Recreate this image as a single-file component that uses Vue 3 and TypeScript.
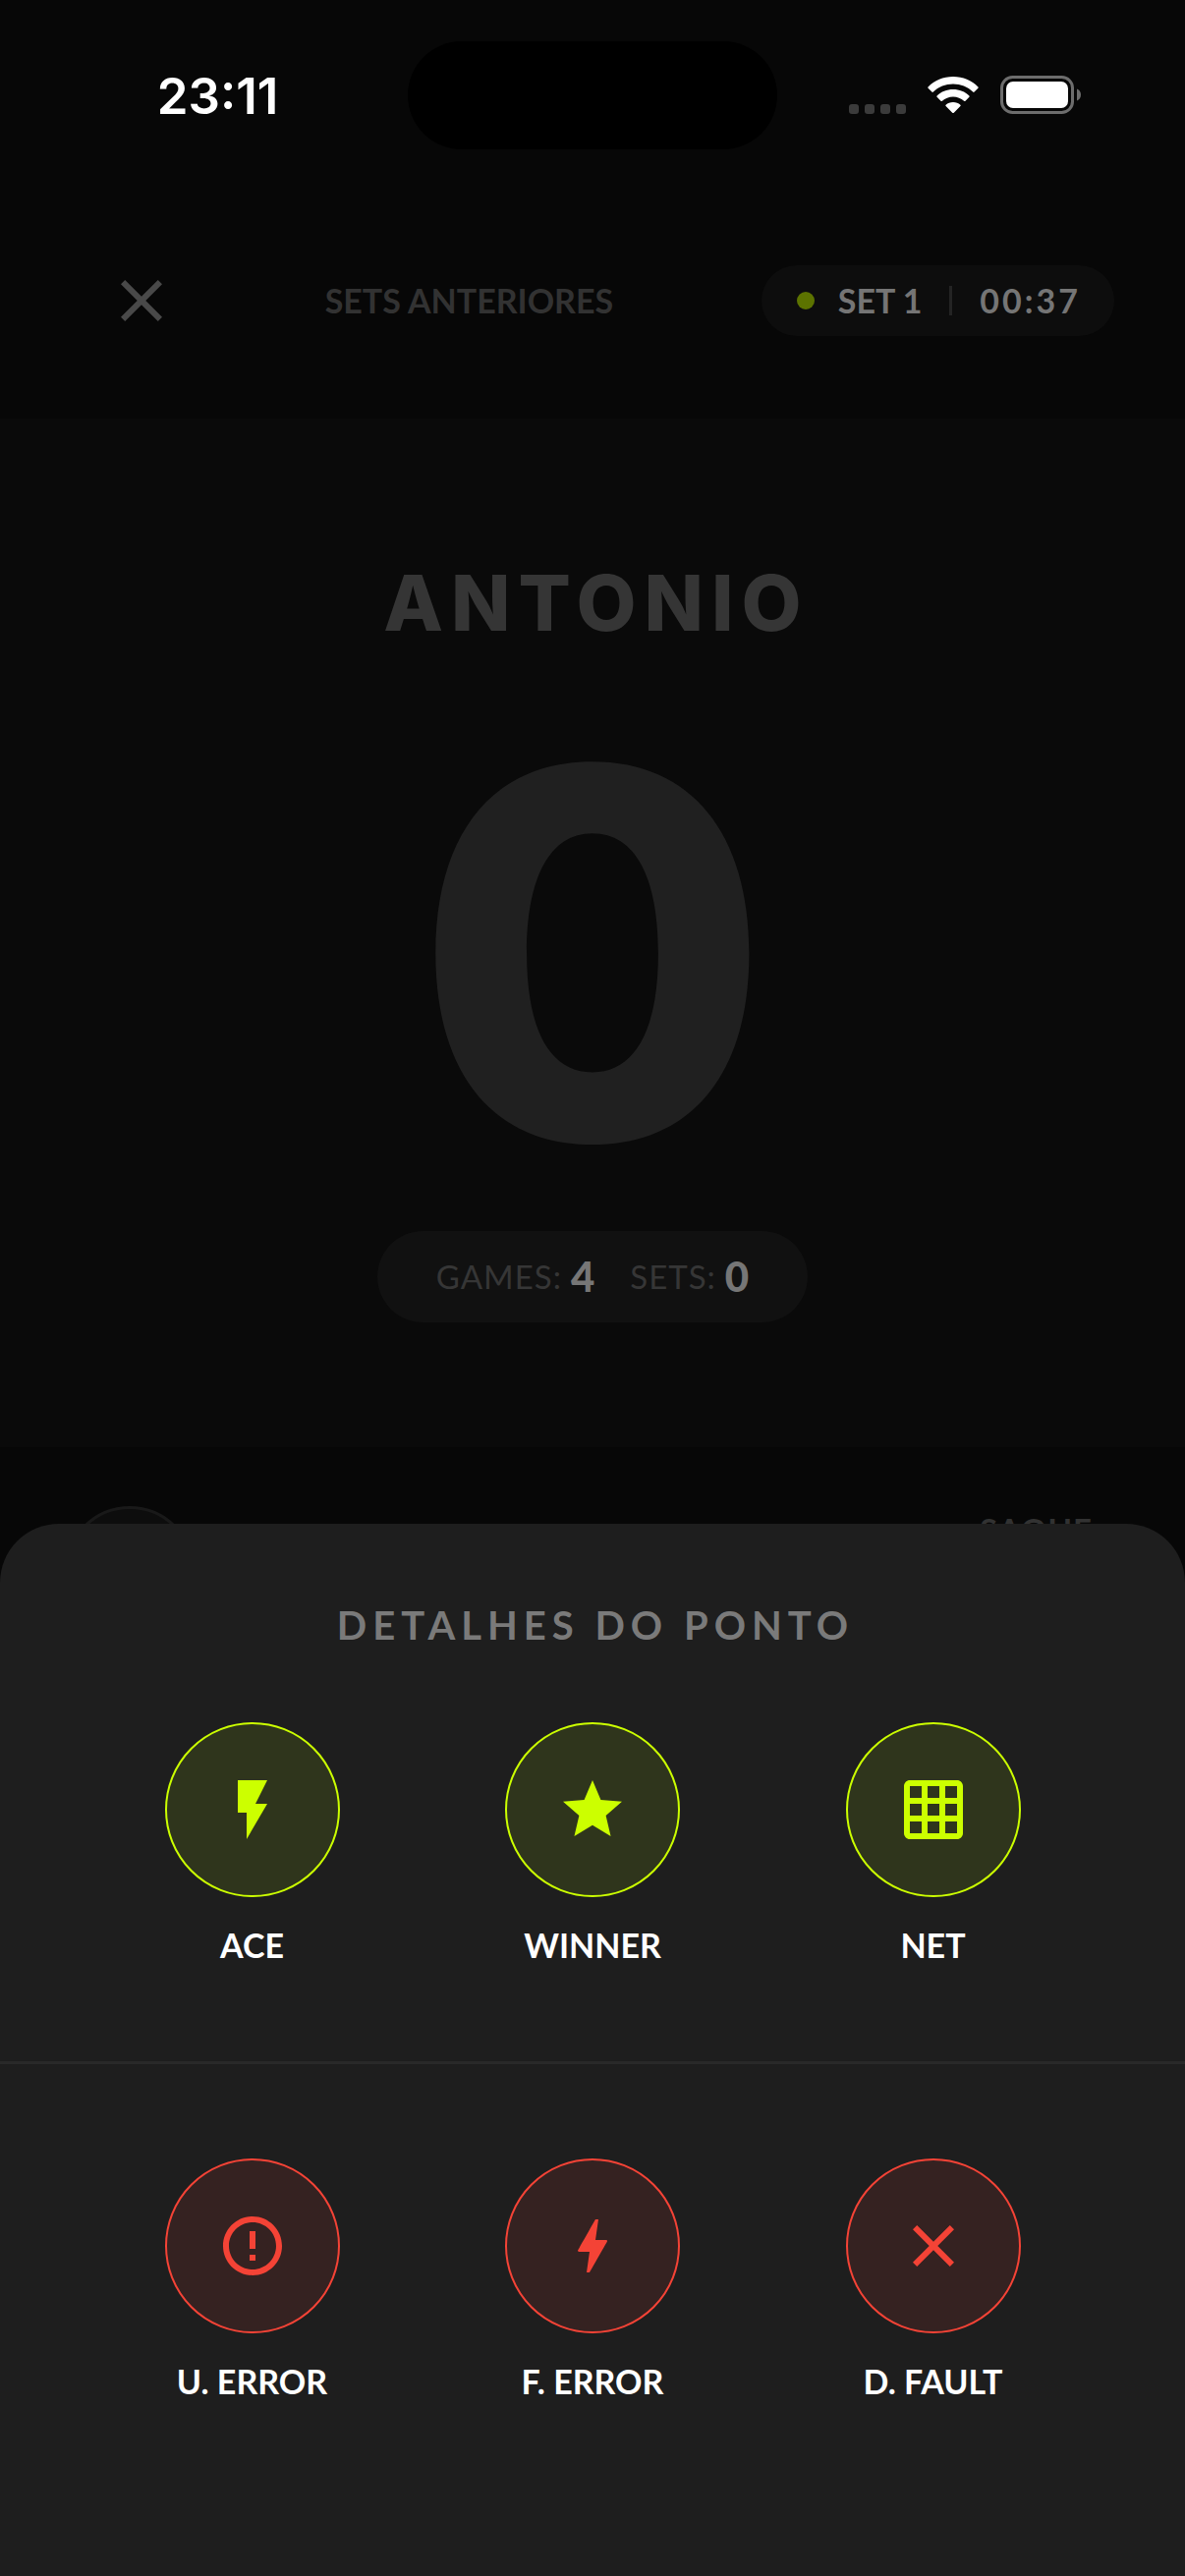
<script setup lang="ts">
interface PointAction {
  label: string
  icon: string
}

const winningActions: PointAction[] = [
  { label: 'ACE', icon: 'M7 2v11h3v9l7-12h-4l4-8z' },
  {
    label: 'WINNER',
    icon: 'M12 17.27 18.18 21l-1.64-7.03L22 9.24l-7.19-.61L12 2 9.19 8.63 2 9.24l5.46 4.73L5.82 21z',
  },
  {
    label: 'NET',
    icon: 'M20 2H4c-1.1 0-2 .9-2 2v16c0 1.1.9 2 2 2h16c1.1 0 2-.9 2-2V4c0-1.1-.9-2-2-2zM8 20H4v-4h4v4zm0-6H4v-4h4v4zm0-6H4V4h4v4zm6 12h-4v-4h4v4zm0-6h-4v-4h4v4zm0-6h-4V4h4v4zm6 12h-4v-4h4v4zm0-6h-4v-4h4v4zm0-6h-4V4h4v4z',
  },
]

const errorActions: PointAction[] = [
  {
    label: 'U. ERROR',
    icon: 'M11 15h2v2h-2zm0-8h2v6h-2zm.99-5C6.47 2 2 6.48 2 12s4.47 10 9.99 10C17.52 22 22 17.52 22 12S17.52 2 11.99 2zM12 20c-4.42 0-8-3.58-8-8s3.58-8 8-8 8 3.58 8 8-3.58 8-8 8z',
  },
  {
    label: 'F. ERROR',
    icon: 'M11 21h-1l1-7H7.5c-.58 0-.57-.32-.38-.66.19-.34.05-.08.07-.12C8.48 10.94 10.42 7.54 13 3h1l-1 7h3.5c.49 0 .56.33.47.51l-.07.15C12.96 17.55 11 21 11 21z',
  },
  {
    label: 'D. FAULT',
    icon: 'M19 6.41 17.59 5 12 10.59 6.41 5 5 6.41 10.59 12 5 17.59 6.41 19 12 13.41 17.59 19 19 17.59 13.41 12z',
  },
]
</script>

<template>
  <div class="screen">
    <div class="status-bar">
      <div class="clock">23:11</div>
      <div class="island"></div>
      <div class="indicators">
        <svg class="signal" viewBox="0 0 58 40" aria-hidden="true">
          <rect x="0" y="29" width="10" height="10" rx="3" />
          <rect x="16" y="29" width="10" height="10" rx="3" />
          <rect x="32" y="29" width="10" height="10" rx="3" />
          <rect x="48" y="29" width="10" height="10" rx="3" />
        </svg>
        <svg class="wifi" viewBox="0 0 52 40" aria-hidden="true">
          <path d="M26 1C16 1 7 5 .6 11.400q-.7.7 0 1.400l3.800 3.800q.7.7 1.400 0C11.200 11.400 18.200 8.600 26 8.600s14.800 2.800 20.200 8q.7.7 1.400 0l3.800-3.800q.7-.7 0-1.400C45 5 36 1 26 1z" />
          <path d="M26 14c-6.400 0-12.200 2.400-16.400 6.400q-.7.7 0 1.400l3.900 3.900q.7.6 1.400 0c3-2.700 6.800-4.300 11.100-4.300s8.100 1.600 11.100 4.300q.7.6 1.400 0l3.900-3.900q.7-.7 0-1.400C38.200 16.400 32.400 14 26 14z" />
          <path d="M26 27c-2.900 0-5.500 1-7.400 2.700q-.7.7 0 1.400l6.600 6.600q.8.7 1.600 0l6.600-6.600q.7-.7 0-1.400C31.500 28 28.900 27 26 27z" />
        </svg>
        <svg class="battery" viewBox="0 0 82 40" aria-hidden="true">
          <rect class="case" x="1.500" y="1.500" width="72" height="36" rx="11" />
          <rect class="charge" x="6" y="6" width="63" height="27" rx="7" />
          <path class="tip" d="M78 13.500c2.600 1 4 3.300 4 6s-1.400 5-4 6z" />
        </svg>
      </div>
    </div>

    <header class="match-header">
      <button class="close" type="button" aria-label="Fechar">
        <svg class="icon" viewBox="0 0 24 24" aria-hidden="true">
          <path d="M19 6.410 17.590 5 12 10.590 6.410 5 5 6.410 10.590 12 5 17.590 6.410 19 12 13.410 17.590 19 19 17.590 13.410 12z" />
        </svg>
      </button>
      <button class="previous" type="button">SETS ANTERIORES</button>
      <div class="timer">
        <span class="live-dot"></span>
        <span class="set-name">SET 1</span>
        <span class="bar"></span>
        <span class="elapsed">00:37</span>
      </div>
    </header>

    <section class="player">
      <h1 class="name">ANTONIO</h1>
      <div class="points">0</div>
      <div class="totals">
        <div class="total"><span>GAMES:</span><b>4</b></div>
        <div class="total"><span>SETS:</span><b>0</b></div>
      </div>
    </section>

    <section class="serve-row">
      <span class="round"></span>
      <span class="serve">SAQUE</span>
    </section>

    <section class="sheet" role="dialog" aria-labelledby="sheet-title">
      <h2 id="sheet-title" class="sheet-title">DETALHES DO PONTO</h2>
      <div class="actions win">
        <button v-for="a in winningActions" :key="a.label" class="action" type="button">
          <span class="disc">
            <svg class="icon" viewBox="0 0 24 24" aria-hidden="true"><path :d="a.icon" /></svg>
          </span>
          <span class="label">{{ a.label }}</span>
        </button>
      </div>
      <hr class="rule" />
      <div class="actions error">
        <button v-for="a in errorActions" :key="a.label" class="action" type="button">
          <span class="disc">
            <svg class="icon" viewBox="0 0 24 24" aria-hidden="true"><path :d="a.icon" /></svg>
          </span>
          <span class="label">{{ a.label }}</span>
        </button>
      </div>
    </section>
  </div>
</template>

<style>
body {
  background: #070707;
}
</style>

<style scoped>
.screen {
  position: relative;
  display: flex;
  flex-direction: column;
  min-height: 100vh;
  overflow: hidden;
  background: #070707;
  font-family: Lato, "Liberation Sans", sans-serif;
}

button {
  margin: 0;
  padding: 0;
  border: 0;
  background: none;
  color: inherit;
  font: inherit;
}

.icon {
  display: block;
  width: 72px;
  height: 72px;
  fill: currentColor;
}

.status-bar {
  display: grid;
  grid-template-columns: 1fr 376px 1fr;
  align-items: center;
  padding: 42px 0 34px;
}

.clock {
  padding-left: 28px;
  color: #fff;
  font-family: Inter, "Liberation Sans", sans-serif;
  font-size: 51px;
  font-weight: 600;
  text-align: center;
}

.island {
  height: 110px;
  border-radius: 55px;
  background: #000;
}

.indicators {
  display: flex;
  align-items: center;
  justify-content: flex-end;
  gap: 22px;
  padding-right: 106px;
}

.indicators svg {
  height: 40px;
}

.signal {
  width: 58px;
  fill: #3b3b3b;
}

.wifi {
  width: 52px;
  fill: #fff;
}

.battery {
  width: 82px;
}

.case {
  fill: none;
  stroke: #6d6d6d;
  stroke-width: 3;
}

.charge {
  fill: #fff;
}

.tip {
  fill: #6d6d6d;
}

.match-header {
  display: flex;
  align-items: center;
  justify-content: space-between;
  padding: 84px 72px 84px 108px;
  font-size: 34px;
  font-weight: 700;
  line-height: 48px;
}

.close {
  color: #494949;
}

.previous {
  color: #323232;
}

.timer {
  display: flex;
  align-items: center;
  padding: 12px 34px 12px 36px;
  border-radius: 36px;
  background: #0d0d0d;
  color: #757575;
}

.live-dot {
  width: 18px;
  height: 18px;
  margin-right: 24px;
  border-radius: 50%;
  background: #5c7300;
}

.bar {
  width: 3px;
  height: 30px;
  margin: 0 28px;
  background: #242424;
}

.elapsed {
  letter-spacing: 3px;
}

.player {
  display: flex;
  flex-direction: column;
  align-items: center;
  padding: 137px 0 127px;
  background: #0a0a0a;
}

.name {
  margin: 0;
  padding-left: 8px;
  color: #353535;
  font-family: Inter, "Liberation Sans", sans-serif;
  font-size: 79px;
  font-weight: 800;
  line-height: 100px;
  letter-spacing: 8px;
}

.points {
  margin: 55px 0 31px;
  color: #202020;
  font-family: Inter, "Liberation Sans", sans-serif;
  font-size: 522px;
  font-weight: 800;
  line-height: 504px;
}

.totals {
  display: flex;
  align-items: center;
  gap: 36px;
  padding: 21px 60px;
  border-radius: 47px;
  background: #111;
}

.total {
  display: flex;
  align-items: center;
  gap: 9px;
  color: #363636;
  font-size: 33px;
  line-height: 51px;
  letter-spacing: 1px;
}

.total b {
  color: #767676;
  font-size: 42px;
  font-weight: 900;
  letter-spacing: 0;
}

.serve-row {
  display: flex;
  flex: 1;
  align-items: flex-start;
  justify-content: space-between;
  padding: 60px 94px 0 66px;
}

.round {
  box-sizing: border-box;
  width: 132px;
  height: 132px;
  border: 3px solid #191919;
  border-radius: 50%;
  background: #0d0d0d;
}

.serve {
  color: #323232;
  font-size: 33px;
  font-weight: 700;
  line-height: 48px;
  letter-spacing: 1px;
}

.sheet {
  position: absolute;
  right: 0;
  bottom: 0;
  left: 0;
  padding: 76px 0 174px;
  border-radius: 60px 60px 0 0;
  background: #1e1e1e;
}

.sheet-title {
  margin: 0 0 72px;
  padding-left: 6px;
  color: #7a7a7a;
  font-size: 40px;
  font-weight: 700;
  line-height: 54px;
  letter-spacing: 6px;
  text-align: center;
}

.actions {
  display: flex;
  justify-content: space-evenly;
}

.action {
  display: flex;
  flex-direction: column;
  align-items: center;
  gap: 25px;
  width: 180px;
}

.disc {
  box-sizing: border-box;
  display: flex;
  align-items: center;
  justify-content: center;
  width: 178px;
  height: 178px;
  border: 2px solid currentColor;
  border-radius: 50%;
}

.win .disc {
  background: #2f351c;
  color: #cf0;
}

.error .disc {
  background: #352221;
  color: #f44336;
}

.label {
  color: #fff;
  font-size: 34px;
  font-weight: 700;
  line-height: 48px;
  white-space: nowrap;
}

.rule {
  height: 3px;
  margin: 94px 0 96px;
  border: 0;
  background: #292929;
}
</style>
